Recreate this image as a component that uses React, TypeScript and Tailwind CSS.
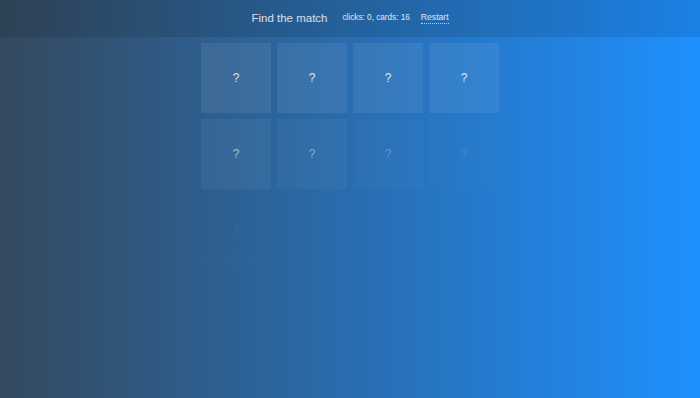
import { useState } from "react";

const fade = [1, 1, 1, 1, 0.7, 0.5, 0.3, 0.15, 0.06, 0, 0, 0, 0, 0, 0, 0];

export default function App() {
  const [clicks, setClicks] = useState(0);
  const cards = Array.from({ length: 16 }, (_, i) => i);

  return (
    <div
      className="min-h-[398px] w-full bg-[linear-gradient(to_right,#34495e,#1e90ff)] text-white/85"
      style={{ fontFamily: '"Liberation Sans", Arial, sans-serif' }}
    >
      <header className="flex h-[37px] items-center justify-center bg-black/10">
        <h1 className="text-[11.5px] leading-none text-white/80">Find the match</h1>
        <span className="ml-[15px] text-[8.2px] leading-none text-white/85">
          clicks: {clicks}, cards: 16
        </span>
        <button
          onClick={() => setClicks(0)}
          className="ml-[11px] border-b border-dotted border-white/70 pb-px text-[8.6px] leading-none text-white/85"
        >
          Restart
        </button>
      </header>

      <main className="mx-auto mt-[6px] grid w-[298px] grid-cols-4 gap-[6px]">
        {cards.map((i) => (
          <button
            key={i}
            onClick={() => setClicks((c) => c + 1)}
            style={{ opacity: fade[i] }}
            className="flex h-[70px] w-[70px] items-center justify-center bg-white/[0.07] text-[12px] text-white/80"
          >
            ?
          </button>
        ))}
      </main>
    </div>
  );
}
